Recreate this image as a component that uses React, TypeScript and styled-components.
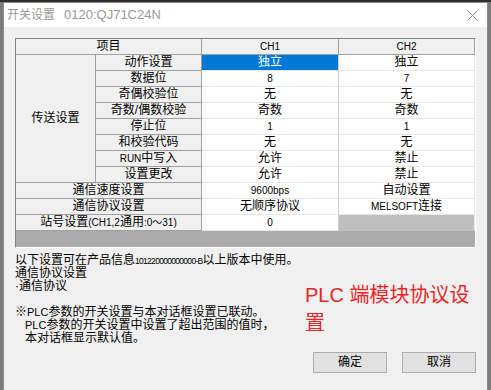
import React from "react";
import styled, { createGlobalStyle, css } from "styled-components";

const GlobalStyle = createGlobalStyle`
  html, body { margin: 0; padding: 0; }
  body {
    width: 491px;
    height: 390px;
    overflow: hidden;
    background: #5a5a5a;
    font-family: "Liberation Sans", "Noto Sans CJK SC", sans-serif;
  }
`;

const Desktop = styled.div`
  box-sizing: border-box;
  width: 491px;
  height: 390px;
  padding: 2px 3px 0 3px;
  background: linear-gradient(#2e2e2e 0 2px, #7c7c7c 2px);
`;

const Window = styled.div`
  box-sizing: border-box;
  width: 485px;
  height: 388px;
  border: 1px solid #8a8a8a;
  border-bottom: none;
  background: #f0f0f0;
  display: flex;
  flex-direction: column;
`;

const TitleBar = styled.div`
  height: 24px;
  flex: none;
  background: #ffffff;
  display: flex;
  align-items: center;
  padding: 0 9px 0 3px;
  color: #999999;
`;

const TitleCjk = styled.span`
  font-size: 12px;
  line-height: 14px;
  margin-right: 9px;
`;

const TitleLatin = styled.span`
  font-size: 13px;
  line-height: 14px;
`;

const CloseIcon = styled.svg`
  margin-left: auto;
  width: 11px;
  height: 11px;
`;

const Body = styled.div`
  flex: 1;
  padding: 11px 0 0 11px;
  display: flex;
  flex-direction: column;
`;

const TableFrame = styled.div`
  box-sizing: border-box;
  width: 461px;
  height: 210px;
  border-top: 1px solid #828282;
  border-left: 1px solid #828282;
  border-right: 1px solid #ffffff;
  border-bottom: 1px solid #ffffff;
  background: #ababab;
`;

const Grid = styled.div`
  display: grid;
  grid-template-columns: 80px 106px 137px 136px;
  grid-auto-rows: 16px;
`;

type Kind = "head" | "label" | "value" | "selected" | "disabled";

const Cell = styled.div<{ $kind: Kind; $cols?: number; $rows?: number; $lastCol?: boolean }>`
  box-sizing: border-box;
  display: flex;
  align-items: center;
  justify-content: center;
  font-size: 12px;
  line-height: 15px;
  color: #000;
  white-space: nowrap;
  grid-column: span ${(p) => p.$cols ?? 1};
  grid-row: span ${(p) => p.$rows ?? 1};
  border-right: 1px solid #a0a0a0;
  border-bottom: 1px solid #a0a0a0;
  background: #f0f0f0;
  ${(p) =>
    p.$kind === "value" &&
    css`
      background: #ffffff;
      border-bottom-color: #e6e6e6;
      border-right-color: ${p.$lastCol ? "#e6e6e6" : "#cfcfcf"};
    `}
  ${(p) =>
    p.$kind === "selected" &&
    css`
      background: #0078d7;
      color: #ffffff;
      border-bottom-color: #e6e6e6;
      border-right-color: #cfcfcf;
    `}
  ${(p) =>
    p.$kind === "disabled" &&
    css`
      background: #bfbfbf;
      border-bottom-color: #bfbfbf;
      border-right-color: #e6e6e6;
    `}
`;

const Lat = styled.span`
  font-size: 10px;
`;

const Footer = styled.div`
  display: flex;
  margin-top: 6px;
`;

const Notes = styled.div`
  width: 290px;
  flex: none;
  font-size: 12px;
  line-height: 13px;
  color: #000;
`;

const NoteLine = styled.div<{ $indent?: boolean }>`
  height: 13px;
  white-space: nowrap;
  padding-left: ${(p) => (p.$indent ? "10px" : "0")};
`;

const Digits = styled.span`
  font-size: 8.5px;
  letter-spacing: -0.7px;
`;

const SmallLat = styled.span`
  font-size: 11px;
`;

const Side = styled.div`
  display: flex;
  flex-direction: column;
`;

const RedNote = styled.div`
  margin-top: 27px;
  width: 176px;
  font-size: 20px;
  line-height: 28px;
  color: #e8262a;
`;

const Buttons = styled.div`
  display: flex;
  gap: 15px;
  margin-top: 15px;
  padding-left: 8px;
`;

const Button = styled.button`
  box-sizing: border-box;
  width: 74px;
  height: 21px;
  padding: 0;
  border: 1px solid #adadad;
  background: #e1e1e1;
  font-family: "Liberation Sans", "Noto Sans CJK SC", sans-serif;
  font-size: 12px;
  line-height: 15px;
  color: #000;
`;

type Row = { label: React.ReactNode; ch1: React.ReactNode; ch2: React.ReactNode };

const transRows: Row[] = [
  { label: "动作设置", ch1: "独立", ch2: "独立" },
  { label: "数据位", ch1: <Lat>8</Lat>, ch2: <Lat>7</Lat> },
  { label: "奇偶校验位", ch1: "无", ch2: "无" },
  { label: "奇数/偶数校验", ch1: "奇数", ch2: "奇数" },
  { label: "停止位", ch1: <Lat>1</Lat>, ch2: <Lat>1</Lat> },
  { label: "和校验代码", ch1: "无", ch2: "无" },
  { label: <><Lat>RUN</Lat>中写入</>, ch1: "允许", ch2: "禁止" },
  { label: "设置更改", ch1: "允许", ch2: "禁止" },
];

export default function App() {
  return (
    <>
      <GlobalStyle />
      <Desktop>
        <Window>
          <TitleBar>
            <TitleCjk>开关设置</TitleCjk>
            <TitleLatin>0120:QJ71C24N</TitleLatin>
            <CloseIcon viewBox="0 0 11 11">
              <path d="M0.5 0.5 L10.5 10.5 M10.5 0.5 L0.5 10.5" stroke="#8a8a8a" strokeWidth="1" fill="none" />
            </CloseIcon>
          </TitleBar>
          <Body>
            <TableFrame>
              <Grid>
                <Cell $kind="head" $cols={2}>项目</Cell>
                <Cell $kind="head"><Lat>CH1</Lat></Cell>
                <Cell $kind="head"><Lat>CH2</Lat></Cell>

                {transRows.map((r, i) => (
                  <React.Fragment key={i}>
                    {i === 0 && (
                      <Cell $kind="label" $rows={8}>传送设置</Cell>
                    )}
                    <Cell $kind="label">{r.label}</Cell>
                    <Cell $kind={i === 0 ? "selected" : "value"}>{r.ch1}</Cell>
                    <Cell $kind="value" $lastCol>{r.ch2}</Cell>
                  </React.Fragment>
                ))}

                <Cell $kind="label" $cols={2}>通信速度设置</Cell>
                <Cell $kind="value"><Lat>9600bps</Lat></Cell>
                <Cell $kind="value" $lastCol>自动设置</Cell>

                <Cell $kind="label" $cols={2}>通信协议设置</Cell>
                <Cell $kind="value">无顺序协议</Cell>
                <Cell $kind="value" $lastCol><Lat>MELSOFT</Lat>连接</Cell>

                <Cell $kind="label" $cols={2}>站号设置<Lat>(CH1,2</Lat>通用<Lat>:0～31)</Lat></Cell>
                <Cell $kind="value"><Lat>0</Lat></Cell>
                <Cell $kind="disabled" />
              </Grid>
            </TableFrame>
            <Footer>
              <Notes>
                <NoteLine>以下设置可在产品信息<Digits>101220000000000-B</Digits>以上版本中使用。</NoteLine>
                <NoteLine>通信协议设置</NoteLine>
                <NoteLine>·通信协议</NoteLine>
                <NoteLine />
                <NoteLine>※<SmallLat>PLC</SmallLat>参数的开关设置与本对话框设置已联动。</NoteLine>
                <NoteLine $indent><SmallLat>PLC</SmallLat>参数的开关设置中设置了超出范围的值时，</NoteLine>
                <NoteLine $indent>本对话框显示默认值。</NoteLine>
              </Notes>
              <Side>
                <RedNote>PLC 端模块协议设置</RedNote>
                <Buttons>
                  <Button>确定</Button>
                  <Button>取消</Button>
                </Buttons>
              </Side>
            </Footer>
          </Body>
        </Window>
      </Desktop>
    </>
  );
}
